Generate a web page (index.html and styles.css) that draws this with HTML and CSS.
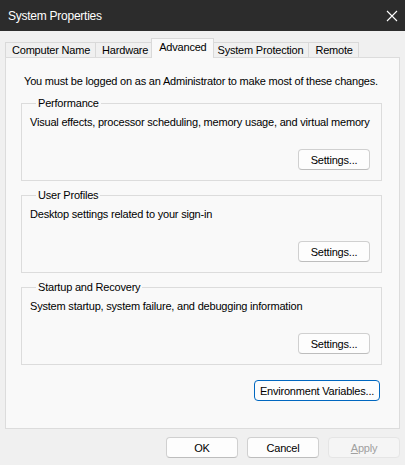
FILE: index.html
```html
<!DOCTYPE html>
<html>
<head>
<meta charset="utf-8">
<link rel="stylesheet" href="styles.css">
</head>
<body>
<div class="window">
  <div class="titlebar">
    <span class="title">System Properties</span>
    <svg class="close" width="12" height="12" viewBox="0 0 12 12"><path d="M1 1 L11 11 M11 1 L1 11" stroke="#ffffff" stroke-width="1.1" fill="none"/></svg>
  </div>
  <div class="tabs">
    <div class="tab first">Computer Name</div>
    <div class="tab">Hardware</div>
    <div class="tab active">Advanced</div>
    <div class="tab">System Protection</div>
    <div class="tab">Remote</div>
  </div>
  <div class="panel">
    <p class="intro">You must be logged on as an Administrator to make most of these changes.</p>
    <fieldset class="group">
      <legend>Performance</legend>
      <p class="desc">Visual effects, processor scheduling, memory usage, and virtual memory</p>
      <div class="actions"><button class="btn">Settings...</button></div>
    </fieldset>
    <fieldset class="group">
      <legend>User Profiles</legend>
      <p class="desc">Desktop settings related to your sign-in</p>
      <div class="actions"><button class="btn">Settings...</button></div>
    </fieldset>
    <fieldset class="group">
      <legend>Startup and Recovery</legend>
      <p class="desc">System startup, system failure, and debugging information</p>
      <div class="actions"><button class="btn">Settings...</button></div>
    </fieldset>
    <div class="env-row"><button class="btn env">Environment Variables...</button></div>
  </div>
  <div class="footer">
    <button class="btn">OK</button>
    <button class="btn">Cancel</button>
    <button class="btn disabled"><u>A</u>pply</button>
  </div>
</div>
</body>
</html>
```
FILE: styles.css
```css
html, body {
  margin: 0;
  padding: 0;
  background: #f0f0f0;
}
body {
  font-family: "Liberation Sans", Arial, sans-serif;
  font-size: 11px;
  letter-spacing: -0.2px;
  color: #000000;
  width: 405px;
  height: 465px;
  overflow: hidden;
}
.titlebar {
  height: 31px;
  background: #2c2c2c;
  display: flex;
  align-items: center;
  justify-content: space-between;
  padding: 0 7px 0 8px;
  color: #ffffff;
}
.title {
  font-size: 12px;
  letter-spacing: -0.25px;
}
.close {
  display: block;
}
.tabs {
  display: flex;
  align-items: flex-end;
  padding: 7px 0 0 5px;
  height: 19px;
  position: relative;
  z-index: 1;
}
.tab {
  height: 15px;
  line-height: 15px;
  padding: 0 5px 0 6px;
  background: #f0f0f0;
  border: 1px solid #d9d9d9;
  border-bottom: none;
  border-left: none;
  box-sizing: border-box;
  white-space: nowrap;
}
.tab.first {
  border-left: 1px solid #d9d9d9;
}
.tab.active {
  height: 20px;
  line-height: 17px;
  margin: 0 -2px 0 -3px;
  padding: 0 6px 0 7px;
  background: #f9f9f9;
  border-left: 1px solid #d9d9d9;
  position: relative;
  top: 1px;
}
.panel {
  margin: 0 5px 0 5px;
  background: #f9f9f9;
  border: 1px solid #dcdcdc;
  padding: 16px 17px 27px 15px;
}
.intro {
  margin: 0 0 7px 0;
  padding-left: 3px;
  line-height: 15px;
  white-space: nowrap;
}
.group {
  margin: 0 0 7px 0;
  padding: 0 11px 10px 8px;
  border: 1px solid #dcdcdc;
  min-width: 0;
}
.group legend {
  padding: 0 2px;
  margin-left: 6px;
  line-height: 15px;
}
.desc {
  margin: 4px 0 0 0;
  line-height: 15px;
  white-space: nowrap;
}
.actions {
  display: flex;
  justify-content: flex-end;
  margin-top: 19px;
}
.btn {
  font-family: inherit;
  font-size: 11px;
  letter-spacing: -0.2px;
  color: #000000;
  width: 72px;
  height: 21px;
  padding: 0;
  background: #fdfdfd;
  border: 1px solid #d0d0d0;
  border-bottom-color: #bdbdbd;
  border-radius: 4px;
  box-sizing: border-box;
}
.env-row {
  display: flex;
  justify-content: flex-end;
  margin-top: 15px;
  padding-right: 2px;
}
.btn.env {
  width: 126px;
  border: 1px solid #0067c0;
}
.footer {
  display: flex;
  justify-content: flex-end;
  gap: 9px;
  margin-top: 8px;
  padding-right: 5px;
}
.btn.disabled {
  color: #a0a0a0;
  background: #f5f5f5;
  border-color: #e5e5e5;
}
.btn.disabled u {
  text-decoration: underline;
}
```
